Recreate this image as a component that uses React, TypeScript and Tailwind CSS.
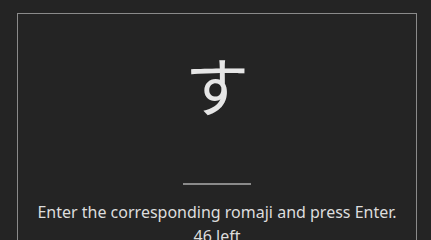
export default function App() {
  return (
    <div className="min-h-screen bg-[#242424] pl-[17px] pt-[13px] font-['Noto_Sans',sans-serif] text-[#dddddd]">
      <div className="flex w-[400px] flex-col items-center border border-[#8a8a8a] pt-[21px] pb-6">
        <div className="font-['Noto_Sans_CJK_JP',sans-serif] text-[64px] leading-[96px] text-[#e6e6e6]">す</div>
        <input
          type="text"
          aria-label="romaji"
          className="mt-[28px] w-[68px] border-b-2 border-[#8a8a8a] bg-transparent text-center text-base outline-none"
        />
        <p className="mt-[15px] text-base leading-6">Enter the corresponding romaji and press Enter.</p>
        <p className="text-base leading-6">46 left</p>
      </div>
    </div>
  )
}
